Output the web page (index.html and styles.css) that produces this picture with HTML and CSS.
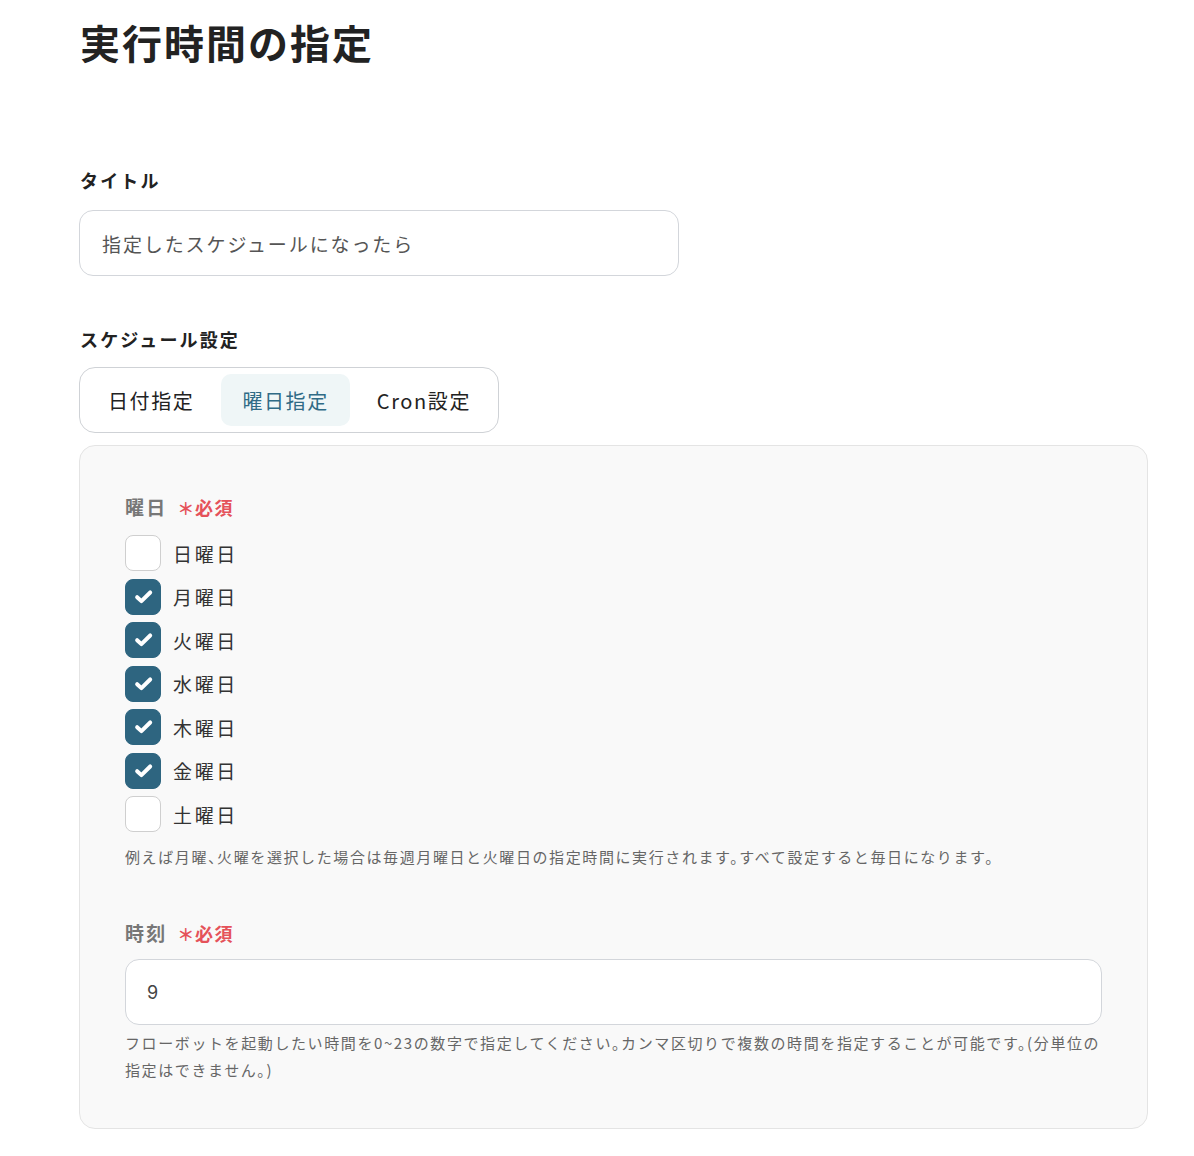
FILE: index.html
```html
<!DOCTYPE html>
<html lang="ja">
<head>
<meta charset="utf-8">
<link rel="stylesheet" href="styles.css">
</head>
<body>
<main class="page">
  <h1 class="page-title">実行時間の指定</h1>

  <section class="field">
    <div class="field-label">タイトル</div>
    <div class="text-input title-input">指定したスケジュールになったら</div>
  </section>

  <section class="field schedule">
    <div class="field-label">スケジュール設定</div>
    <div class="tabs">
      <div class="tab">日付指定</div>
      <div class="tab active">曜日指定</div>
      <div class="tab">Cron設定</div>
    </div>
  </section>

  <section class="panel">
    <div class="sub-label">曜日 <span class="req"><span class="star">＊</span>必須</span></div>
    <ul class="days">
      <li class="day"><span class="box"></span><span class="day-name">日曜日</span></li>
      <li class="day"><span class="box checked"><svg viewBox="0 0 36 36" width="36" height="36"><path d="M11.8 18.2 L16.3 22.4 L25.6 13.2" fill="none" stroke="#fff" stroke-width="4.2" stroke-linecap="round" stroke-linejoin="round"/></svg></span><span class="day-name">月曜日</span></li>
      <li class="day"><span class="box checked"><svg viewBox="0 0 36 36" width="36" height="36"><path d="M11.8 18.2 L16.3 22.4 L25.6 13.2" fill="none" stroke="#fff" stroke-width="4.2" stroke-linecap="round" stroke-linejoin="round"/></svg></span><span class="day-name">火曜日</span></li>
      <li class="day"><span class="box checked"><svg viewBox="0 0 36 36" width="36" height="36"><path d="M11.8 18.2 L16.3 22.4 L25.6 13.2" fill="none" stroke="#fff" stroke-width="4.2" stroke-linecap="round" stroke-linejoin="round"/></svg></span><span class="day-name">水曜日</span></li>
      <li class="day"><span class="box checked"><svg viewBox="0 0 36 36" width="36" height="36"><path d="M11.8 18.2 L16.3 22.4 L25.6 13.2" fill="none" stroke="#fff" stroke-width="4.2" stroke-linecap="round" stroke-linejoin="round"/></svg></span><span class="day-name">木曜日</span></li>
      <li class="day"><span class="box checked"><svg viewBox="0 0 36 36" width="36" height="36"><path d="M11.8 18.2 L16.3 22.4 L25.6 13.2" fill="none" stroke="#fff" stroke-width="4.2" stroke-linecap="round" stroke-linejoin="round"/></svg></span><span class="day-name">金曜日</span></li>
      <li class="day"><span class="box"></span><span class="day-name">土曜日</span></li>
    </ul>
    <p class="help">例えば月曜、火曜を選択した場合は毎週月曜日と火曜日の指定時間に実行されます。すべて設定すると毎日になります。</p>

    <div class="sub-label time-label">時刻 <span class="req"><span class="star">＊</span>必須</span></div>
    <div class="text-input time-input">9</div>
    <p class="help help-time">フローボットを起動したい時間を0~23の数字で指定してください。カンマ区切りで複数の時間を指定することが可能です。(分単位の指定はできません。)</p>
  </section>
</main>
</body>
</html>
```

FILE: styles.css
```css
* { box-sizing: border-box; }

html, body {
  margin: 0;
  padding: 0;
  background: #ffffff;
}

body {
  font-family: "Noto Sans CJK JP", "Noto Sans", sans-serif;
  color: #222;
}

.page {
  padding: 0 46px 28px 79px;
}

.page-title {
  margin: 12px 0 0 1px;
  font-size: 40px;
  line-height: 60px;
  font-weight: 700;
  color: #222;
  letter-spacing: 0.05em;
}

.field-label {
  margin-left: 1px;
  font-size: 18px;
  line-height: 27px;
  font-weight: 700;
  color: #222;
  letter-spacing: 0.12em;
}

.field {
  margin-top: 95px;
}

.field.schedule {
  margin-top: 50px;
}

.text-input {
  height: 66px;
  border: 1px solid #d3d6db;
  border-radius: 14px;
  background: #fff;
  display: flex;
  align-items: center;
  font-size: 19px;
  color: #555;
  letter-spacing: 0.1em;
}

.title-input {
  width: 600px;
  margin-top: 16px;
  padding-left: 22px;
}

.tabs {
  margin-top: 14px;
  display: inline-flex;
  border: 1px solid #cfd2d6;
  border-radius: 16px;
  padding: 6px 6px;
}

.tab {
  height: 52px;
  padding: 0 21px;
  display: flex;
  align-items: center;
  font-size: 20px;
  letter-spacing: 0.08em;
  color: #222;
  border-radius: 10px;
}

.tab:first-child { padding-left: 22px; padding-right: 27px; }
.tab:last-child { padding-left: 27px; padding-right: 21px; }

.tab.active {
  background: #eff6f7;
  color: #2f6b86;
}

.panel {
  margin-top: 12px;
  background: #f9f9f9;
  border: 1px solid #e4e4e4;
  border-radius: 16px;
  padding: 47px 45px 45px 45px;
}

.sub-label {
  height: 27px;
  font-size: 19px;
  line-height: 27px;
  font-weight: 700;
  color: #777;
  letter-spacing: 0.12em;
}

.req {
  margin-left: 3px;
  color: #e5525a;
  font-size: 18px;
  line-height: 27px;
  font-weight: 700;
  letter-spacing: 0.08em;
}

.req .star {
  font-size: 17px;
  letter-spacing: 0.05em;
}

.days {
  list-style: none;
  margin: 15px 0 0;
  padding: 0;
  display: flex;
  flex-direction: column;
  gap: 7.5px;
}

.day {
  display: flex;
  align-items: center;
  height: 36px;
}

.box {
  width: 36px;
  height: 36px;
  border-radius: 8px;
  border: 1px solid #cfcfcf;
  background: #fff;
  flex: none;
  display: flex;
  align-items: center;
  justify-content: center;
}

.box.checked {
  background: #2e6580;
  border-color: #2e6580;
}

.box svg { display: block; }

.day-name {
  margin-left: 12px;
  font-size: 19px;
  letter-spacing: 0.14em;
  color: #333;
}

.help {
  margin: 10.5px 0 0;
  font-size: 15px;
  line-height: 27px;
  color: #666;
  letter-spacing: 1.6px;
  font-feature-settings: "halt";
}

.time-label {
  margin-top: 49px;
}

.time-input {
  margin-top: 13.5px;
  padding-left: 21px;
  font-family: "Inter", "Noto Sans", sans-serif;
  font-size: 18px;
  color: #444;
}

.help-time {
  margin-top: 3.5px;
}
```
